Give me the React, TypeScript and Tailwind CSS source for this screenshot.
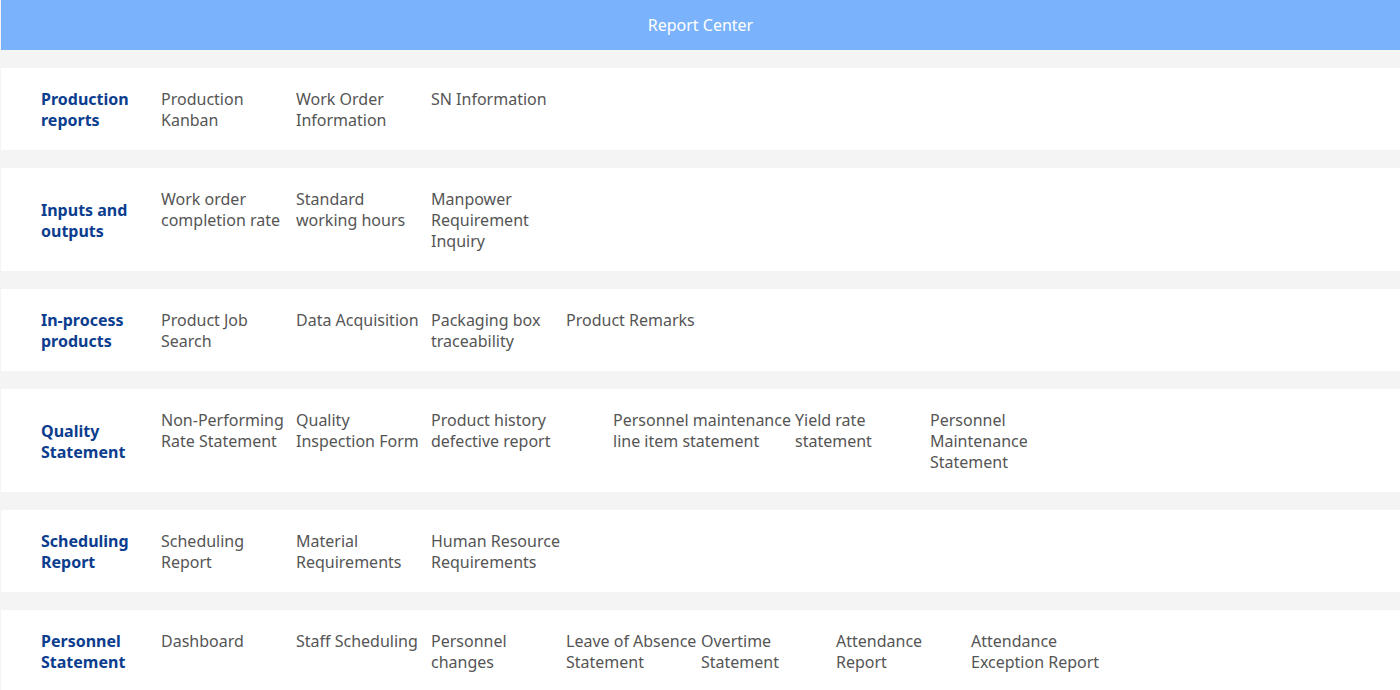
const groups: { title: string[]; items: { lines: string[]; w?: string }[] }[] = [
  {
    title: ['Production', 'reports'],
    items: [
      { lines: ['Production', 'Kanban'] },
      { lines: ['Work Order', 'Information'] },
      { lines: ['SN Information'] },
    ],
  },
  {
    title: ['Inputs and', 'outputs'],
    items: [
      { lines: ['Work order', 'completion rate'] },
      { lines: ['Standard', 'working hours'] },
      { lines: ['Manpower', 'Requirement', 'Inquiry'] },
    ],
  },
  {
    title: ['In-process', 'products'],
    items: [
      { lines: ['Product Job', 'Search'] },
      { lines: ['Data Acquisition'] },
      { lines: ['Packaging box', 'traceability'] },
      { lines: ['Product Remarks'] },
    ],
  },
  {
    title: ['Quality', 'Statement'],
    items: [
      { lines: ['Non-Performing', 'Rate Statement'] },
      { lines: ['Quality', 'Inspection Form'] },
      { lines: ['Product history', 'defective report'], w: 'w-[182px]' },
      { lines: ['Personnel maintenance', 'line item statement'], w: 'w-[182px]' },
      { lines: ['Yield rate', 'statement'] },
      { lines: ['Personnel', 'Maintenance', 'Statement'] },
    ],
  },
  {
    title: ['Scheduling', 'Report'],
    items: [
      { lines: ['Scheduling', 'Report'] },
      { lines: ['Material', 'Requirements'] },
      { lines: ['Human Resource', 'Requirements'] },
    ],
  },
  {
    title: ['Personnel', 'Statement'],
    items: [
      { lines: ['Dashboard'] },
      { lines: ['Staff Scheduling'] },
      { lines: ['Personnel', 'changes'] },
      { lines: ['Leave of Absence', 'Statement'] },
      { lines: ['Overtime', 'Statement'] },
      { lines: ['Attendance', 'Report'] },
      { lines: ['Attendance', 'Exception Report'] },
    ],
  },
];

export default function App() {
  return (
    <div
      className="min-h-[690px] bg-[#f4f4f4] pl-px text-[16px] leading-[21px]"
      style={{ fontFamily: '"Noto Sans", "Open Sans", sans-serif' }}
    >
      <div className="flex h-[50px] items-center justify-center bg-[#7ab3fb] text-white">
        Report Center
      </div>
      <div className="flex flex-col gap-[18px] pt-[18px]">
        {groups.map((g) => (
          <div key={g.title.join(' ')} className="flex bg-white pt-[21px] pb-[19px] pl-10">
            <div className="flex w-[120px] shrink-0 flex-col justify-center font-bold text-[#0c3d8e]">
              {g.title.map((t) => (
                <span key={t} className="whitespace-nowrap">{t}</span>
              ))}
            </div>
            {g.items.map((it) => (
              <div
                key={it.lines.join(' ')}
                className={`${it.w ?? 'w-[135px]'} flex shrink-0 cursor-pointer flex-col text-[#555555] hover:text-[#409eff]`}
              >
                {it.lines.map((l) => (
                  <span key={l} className="whitespace-nowrap">{l}</span>
                ))}
              </div>
            ))}
          </div>
        ))}
      </div>
    </div>
  );
}
